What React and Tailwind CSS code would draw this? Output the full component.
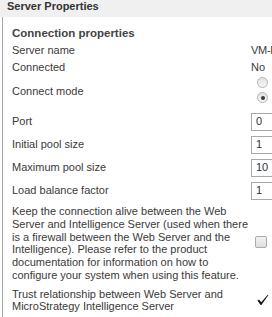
import React from 'react';

function Radio({ checked }) {
  return (
    <div className="relative h-[11px] w-[11px] rounded-full border border-[#b4b4b4] bg-gradient-to-b from-[#e2e2e2] to-[#f7f7f7]">
      {checked && <div className="absolute left-[3px] top-[3px] h-[4px] w-[4px] rounded-full bg-[#3c3c3c]" />}
    </div>
  );
}

function NumberField({ value }) {
  return (
    <div className="flex h-[18px] w-[40px] items-center border border-[#a9a9a9] bg-white pl-[4px] text-[#2b3440]">
      {value}
    </div>
  );
}

function Row({ label, children, className = '' }) {
  return (
    <div className={`flex items-center ${className}`}>
      <div className="w-[239px] shrink-0">{label}</div>
      <div className="shrink-0">{children}</div>
    </div>
  );
}

export default function App() {
  return (
    <div className="h-[317px] w-[272px] overflow-hidden bg-white font-['Liberation_Sans',sans-serif] text-[11px] text-[#3a3a3a]">
      <div className="h-[17px] bg-[#f0f0f0] pl-[7px] text-[11px] font-bold leading-[13px] text-[#333]">
        Server Properties
      </div>
      <div className="ml-[2px] h-[300px] border-l border-[#a8a8a8] pl-[9px]">
        <div className="pt-[9px] text-[11.5px] font-bold leading-[14px] text-[#444]">Connection properties</div>
        <div className="mt-[2px]">
          <Row label="Server name" className="h-[17px]">
            <span className="whitespace-nowrap tracking-[-0.3px]">VM-H</span>
          </Row>
          <Row label="Connected" className="h-[17px]">
            No
          </Row>
          <div className="flex h-[31px] items-center">
            <div className="w-[239px] shrink-0">Connect mode</div>
            <div className="flex flex-col gap-[4px] self-start pl-[6px] pt-[1px]">
              <Radio />
              <Radio checked />
            </div>
          </div>
        </div>
        <div className="mt-[3px]">
          <Row label="Port" className="h-[23px]">
            <NumberField value="0" />
          </Row>
          <Row label="Initial pool size" className="h-[23px]">
            <NumberField value="1" />
          </Row>
          <Row label="Maximum pool size" className="h-[23px]">
            <NumberField value="10" />
          </Row>
          <Row label="Load balance factor" className="h-[23px]">
            <NumberField value="1" />
          </Row>
        </div>
        <div className="mt-[3px] flex items-center">
          <div className="w-[243px] shrink-0 whitespace-nowrap leading-[12.8px]">
            Keep the connection alive between the Web
            <br />
            Server and Intelligence Server (used when there
            <br />
            is a firewall between the Web Server and the
            <br />
            Intelligence). Please refer to the product
            <br />
            documentation for information on how to
            <br />
            configure your system when using this feature.
          </div>
          <div className="-mt-[2px] h-[12px] w-[12px] shrink-0 rounded-[2px] border border-[#ababab] bg-gradient-to-b from-[#f2f2f2] to-[#dedede]" />
        </div>
        <div className="mt-[6px] flex items-center">
          <div className="w-[245px] shrink-0 whitespace-nowrap leading-[12px]">
            Trust relationship between Web Server and
            <br />
            MicroStrategy Intelligence Server
          </div>
          <svg width="12" height="12" viewBox="0 0 12 12" className="mt-[1px]">
            <path d="M0.5 6.5 L2 5.5 L4.2 8.2 L10.8 0.8 L11.3 1.3 L4.3 11 L3.6 11 Z" fill="#111" />
          </svg>
        </div>
      </div>
    </div>
  );
}
